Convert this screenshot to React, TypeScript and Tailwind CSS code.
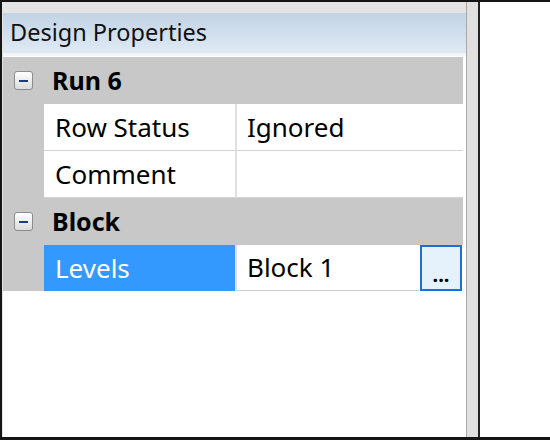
import React from "react";

function MinusBox() {
  return (
    <div className="w-[19px] h-[19px] rounded-[3px] border border-[#8c8c8c] bg-gradient-to-b from-[#ffffff] to-[#dcdcdc] flex items-center justify-center">
      <div className="w-[9px] h-[2px] bg-[#1c3d7a]" />
    </div>
  );
}

function Category({ label }: { label: string }) {
  return (
    <div className="h-[47px] bg-[#c8c8c8] flex items-center">
      <div className="w-[41px] flex items-center pl-[11px]">
        <MinusBox />
      </div>
      <span className="font-bold text-[25px] text-black pl-[8px]">{label}</span>
    </div>
  );
}

function Prop({ name, value, selected, button, last }: { name: string; value: string; selected?: boolean; button?: boolean; last?: boolean }) {
  return (
    <div className={`flex ${last ? "h-[46px]" : "h-[47px]"}`}>
      <div className="w-[41px] bg-[#c8c8c8]" />
      <div
        className={`w-[193px] flex items-center pl-[11px] text-[26px] border-r-2 border-[#e0e0e0] ${
          selected ? "bg-[#3399ff] text-white" : "bg-white text-black border-b border-b-[#d4d4d4]"
        }`}
      >
        {name}
      </div>
      <div className="flex-1 flex">
        <div className={`flex-1 flex items-center pl-[10px] text-[26px] text-black bg-white border-b ${button ? "border-[#cfcfcf]" : "border-[#d4d4d4]"}`}>
          {value}
        </div>
        {button && (
          <div className="w-[42px] mx-[1px] border-2 border-[#1a6fd8] bg-[#e5f1fb] flex items-end justify-center pb-[4px] text-[20px] font-bold leading-none text-black">
            ...
          </div>
        )}
      </div>
    </div>
  );
}

export default function App() {
  return (
    <div className="w-[550px] h-[440px] bg-white border-t-2 border-l-2 border-b-[3px] border-[#151515] flex font-['Noto_Sans',sans-serif]">
      <div className="w-[478px] shrink-0 flex">
        <div className="flex-1 flex flex-col bg-[#e4e4e4] pt-[11px] pl-[1px]">
          <div className="h-[40px] shrink-0 bg-gradient-to-b from-[#c2d3e5] to-[#dfeaf5] pl-[7px] flex items-center text-[23.5px] text-[#111]">
            Design Properties
          </div>
          <div className="flex-1 bg-white border-t-[3px] border-[#f4f4f4] pt-[1px] pr-[3px]">
            <Category label="Run 6" />
            <Prop name="Row Status" value="Ignored" />
            <Prop name="Comment" value="" />
            <Category label="Block" />
            <Prop name="Levels" value="Block 1" selected button last />
          </div>
        </div>
        <div className="w-[14px] bg-[#e0e0e0] border-l border-[#a8a8a8] border-r-2 border-r-[#222]" />
      </div>
      <div className="flex-1 bg-white" />
    </div>
  );
}
